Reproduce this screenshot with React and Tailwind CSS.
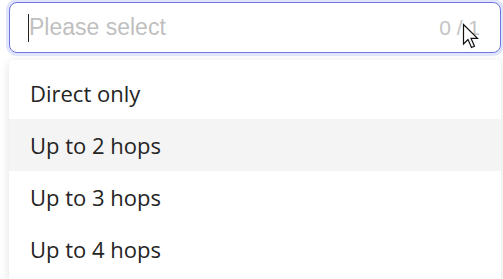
import React from 'react';

const options = ['Direct only', 'Up to 2 hops', 'Up to 3 hops', 'Up to 4 hops'];

export default function App() {
    const hovered = 1;

    return (
        <div className="relative w-[503px] h-[279px] bg-white overflow-hidden">
            {/* Select input */}
            <div className="pl-[9px] pr-[2px] pt-[2px]">
                <div className="relative h-[51px] flex items-center justify-between rounded-[8px] border border-[#6f74e0] bg-white pl-[18px] pr-[20px] shadow-[0_0_0_3px_#dfe6fb]">
                    <div className="flex items-center">
                        <span className="w-px h-[28px] bg-[#222]" />
                        <span className="text-[23px] text-[#bfbfbf] leading-none" style={{ fontFamily: '"Liberation Sans", Arial, sans-serif' }}>
                            Please select
                        </span>
                    </div>
                    <span className="text-[21px] text-[#c4c4c4] leading-none" style={{ fontFamily: '"Liberation Sans", Arial, sans-serif' }}>
                        0 / 1
                    </span>

                    {/* Mouse pointer */}
                    <svg className="absolute left-[452px] top-[20px]" width="20" height="28" viewBox="0 0 20 28">
                        <path
                            d="M1.5 1.5 L1.5 21 L6 16.5 L9.5 24.5 L12.5 23.2 L9 15.3 L15.5 15.3 Z"
                            fill="#fff"
                            stroke="#111"
                            strokeWidth="1.2"
                            strokeLinejoin="miter"
                        />
                    </svg>
                </div>
            </div>

            {/* Dropdown */}
            <div className="mt-[7px] ml-[9px] mr-[2px] bg-white rounded-[4px] shadow-[0_2px_10px_rgba(0,0,0,0.12)] py-[7px]">
                {options.map((opt, i) => (
                    <div
                        key={opt}
                        className={`h-[52px] flex items-center pl-[21px] text-[22px] text-[#242424] ${i === hovered ? 'bg-[#f4f4f4]' : ''}`}
                        style={{ fontFamily: '"Open Sans", "Noto Sans", sans-serif' }}
                    >
                        {opt}
                    </div>
                ))}
            </div>
        </div>
    );
}
